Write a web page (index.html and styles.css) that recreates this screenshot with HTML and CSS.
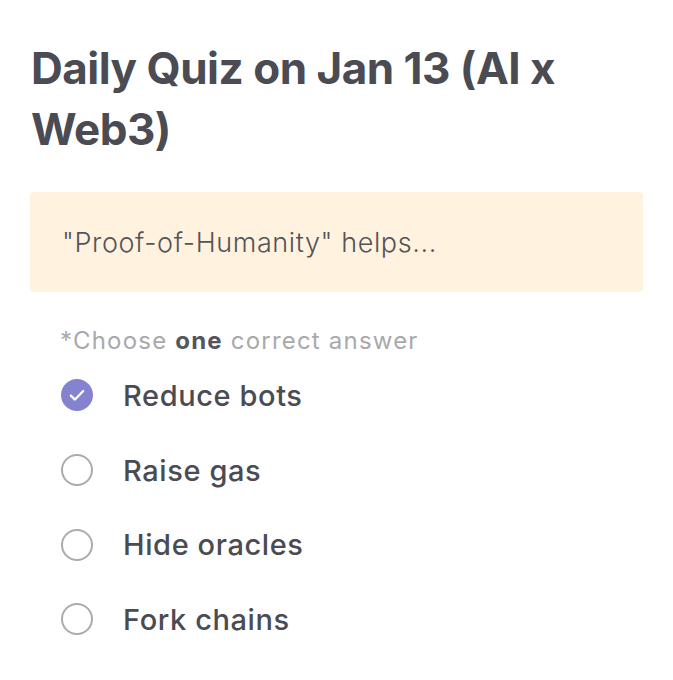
FILE: index.html
```html
<!DOCTYPE html>
<html>
<head>
<meta charset="utf-8">
<link rel="stylesheet" href="styles.css">
</head>
<body>
<div class="page">
  <h1 class="title">Daily Quiz on Jan 13 (AI x Web3)</h1>
  <div class="question">"Proof-of-Humanity" helps...</div>
  <div class="hint">*Choose <b>one</b> correct answer</div>
  <ul class="options">
    <li class="option checked">
      <span class="radio"><svg viewBox="0 0 32 32" width="32" height="32"><path d="M9.8 16.6 L14 20.6 L22.2 12" fill="none" stroke="#fff" stroke-width="2.2" stroke-linecap="round" stroke-linejoin="round"/></svg></span>
      <span class="label">Reduce bots</span>
    </li>
    <li class="option"><span class="radio"></span><span class="label">Raise gas</span></li>
    <li class="option"><span class="radio"></span><span class="label">Hide oracles</span></li>
    <li class="option"><span class="radio"></span><span class="label">Fork chains</span></li>
  </ul>
</div>
</body>
</html>
```
FILE: styles.css
```css
html, body { margin: 0; padding: 0; background: #fff; }
body { font-family: Inter, "Noto Sans", sans-serif; color: #4a4b53; }
.page { padding: 38px 30px 0 30px; width: 613px; }
.title {
  margin: 0;
  font-size: 44px;
  font-weight: 700;
  line-height: 61px;
  letter-spacing: -0.5px;
  color: #4a4b53;
  padding-left: 1px;
}
.question {
  margin-top: 32px;
  background: #fff3e0;
  border-radius: 4px;
  height: 100px;
  box-sizing: border-box;
  padding: 0 32px;
  display: flex;
  align-items: center;
  font-size: 27px;
  font-weight: 300;
  letter-spacing: 0.6px;
  color: #555458;
}
.hint {
  margin: 34px 0 0 30px;
  font-size: 24px;
  line-height: 30px;
  letter-spacing: 1.2px;
  color: #a9a9ab;
}
.hint b { font-weight: 700; color: #55555b; }
.options { list-style: none; margin: 2px 0 0 0; padding: 0 0 0 31px; }
.option {
  display: flex;
  align-items: center;
  height: 74.7px;
}
.radio {
  width: 28px; height: 28px;
  border: 2px solid #ababab;
  border-radius: 50%;
  flex: none;
  display: flex; align-items: center; justify-content: center;
}
.checked .radio { width: 32px; height: 32px; border: none; background: #8583d0; }
.label {
  margin-left: 30px;
  font-size: 29px;
  font-weight: 500;
  letter-spacing: 0.6px;
  color: #4a4b53;
}
```
